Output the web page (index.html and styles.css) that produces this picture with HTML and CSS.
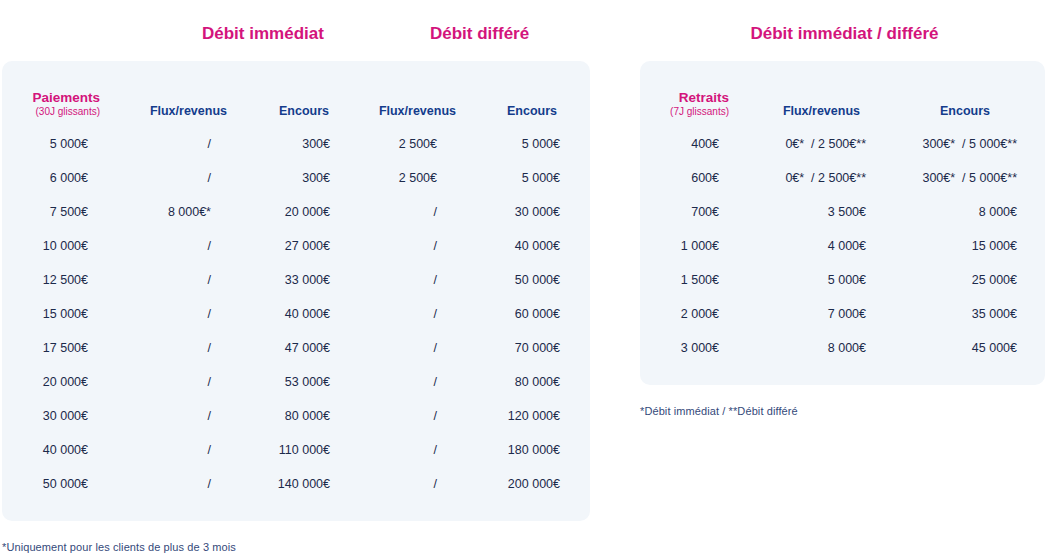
FILE: index.html
```html
<!DOCTYPE html>
<html lang="fr">
<head>
<meta charset="utf-8">
<title>Plafonds</title>
<link rel="stylesheet" href="styles.css">
</head>
<body>
<div class="page">
  <section class="block block-left">
    <div class="titles titles-left">
      <h2 class="title t1">Débit immédiat</h2>
      <h2 class="title t2">Débit différé</h2>
    </div>
    <div class="panel">
      <div class="grid grid-left">
        <div class="th c1"><span class="main">Paiements</span><span class="sub">(30J glissants)</span></div>
        <div class="th c2">Flux/revenus</div>
        <div class="th c3">Encours</div>
        <div class="th c4">Flux/revenus</div>
        <div class="th c5">Encours</div>

        <div class="td c1">5 000€</div><div class="td c2">/</div><div class="td c3">300€</div><div class="td c4">2 500€</div><div class="td c5">5 000€</div>
        <div class="td c1">6 000€</div><div class="td c2">/</div><div class="td c3">300€</div><div class="td c4">2 500€</div><div class="td c5">5 000€</div>
        <div class="td c1">7 500€</div><div class="td c2">8 000€*</div><div class="td c3">20 000€</div><div class="td c4">/</div><div class="td c5">30 000€</div>
        <div class="td c1">10 000€</div><div class="td c2">/</div><div class="td c3">27 000€</div><div class="td c4">/</div><div class="td c5">40 000€</div>
        <div class="td c1">12 500€</div><div class="td c2">/</div><div class="td c3">33 000€</div><div class="td c4">/</div><div class="td c5">50 000€</div>
        <div class="td c1">15 000€</div><div class="td c2">/</div><div class="td c3">40 000€</div><div class="td c4">/</div><div class="td c5">60 000€</div>
        <div class="td c1">17 500€</div><div class="td c2">/</div><div class="td c3">47 000€</div><div class="td c4">/</div><div class="td c5">70 000€</div>
        <div class="td c1">20 000€</div><div class="td c2">/</div><div class="td c3">53 000€</div><div class="td c4">/</div><div class="td c5">80 000€</div>
        <div class="td c1">30 000€</div><div class="td c2">/</div><div class="td c3">80 000€</div><div class="td c4">/</div><div class="td c5">120 000€</div>
        <div class="td c1">40 000€</div><div class="td c2">/</div><div class="td c3">110 000€</div><div class="td c4">/</div><div class="td c5">180 000€</div>
        <div class="td c1">50 000€</div><div class="td c2">/</div><div class="td c3">140 000€</div><div class="td c4">/</div><div class="td c5">200 000€</div>
      </div>
    </div>
    <p class="note">*Uniquement pour les clients de plus de 3 mois</p>
  </section>

  <section class="block block-right">
    <div class="titles titles-right">
      <h2 class="title">Débit immédiat / différé</h2>
    </div>
    <div class="panel">
      <div class="grid grid-right">
        <div class="th r1"><span class="main">Retraits</span><span class="sub">(7J glissants)</span></div>
        <div class="th r2">Flux/revenus</div>
        <div class="th r3">Encours</div>

        <div class="td r1">400€</div><div class="td r2">0€*&nbsp; / 2 500€**</div><div class="td r3">300€*&nbsp; / 5 000€**</div>
        <div class="td r1">600€</div><div class="td r2">0€*&nbsp; / 2 500€**</div><div class="td r3">300€*&nbsp; / 5 000€**</div>
        <div class="td r1">700€</div><div class="td r2">3 500€</div><div class="td r3">8 000€</div>
        <div class="td r1">1 000€</div><div class="td r2">4 000€</div><div class="td r3">15 000€</div>
        <div class="td r1">1 500€</div><div class="td r2">5 000€</div><div class="td r3">25 000€</div>
        <div class="td r1">2 000€</div><div class="td r2">7 000€</div><div class="td r3">35 000€</div>
        <div class="td r1">3 000€</div><div class="td r2">8 000€</div><div class="td r3">45 000€</div>
      </div>
    </div>
    <p class="note">*Débit immédiat / **Débit différé</p>
  </section>
</div>
</body>
</html>
```

FILE: styles.css
```css
* { box-sizing: border-box; }

html, body {
  margin: 0;
  padding: 0;
  background: #ffffff;
}

body {
  font-family: "Liberation Sans", Arial, sans-serif;
  color: #1c2a4b;
  width: 1045px;
  height: 558px;
  overflow: hidden;
}

.page {
  display: flex;
  align-items: flex-start;
  padding-left: 2px;
}

.block-left { width: 588px; }
.block-right { width: 405px; margin-left: 50px; }

.titles {
  height: 61px;
  padding-top: 24px;
}

.titles-left {
  display: grid;
  grid-template-columns: 200px 228px 1fr;
}
.titles-left .t1 { grid-column: 2; }
.titles-left .t2 { grid-column: 3; }

.titles-right { text-align: center; padding-left: 4px; }

.title {
  margin: 0;
  font-size: 17px;
  line-height: 20px;
  font-weight: 700;
  color: #d3147c;
  white-space: nowrap;
}

.panel {
  background: #f2f6fa;
  border-radius: 10px;
}

.grid {
  display: grid;
  align-items: last baseline;
}

.grid-left {
  grid-template-columns: 80px 127px 103px 126px 104px;
  padding: 30px 30px 20px 18px;
}

.grid-right {
  grid-template-columns: 69px 137px 151px;
  padding: 30px 28px 20px 20px;
}

.th {
  font-size: 12.5px;
  line-height: 16px;
  font-weight: 700;
  color: #143c8c;
  text-align: right;
  white-space: nowrap;
  margin-bottom: 8px;
}

.th .main {
  display: block;
  font-size: 13.5px;
  line-height: 14px;
  color: #d3147c;
}

.th .sub {
  display: block;
  font-size: 10px;
  line-height: 13px;
  font-weight: 400;
  color: #d3147c;
}

.td {
  font-size: 12.5px;
  line-height: 34px;
  text-align: right;
  white-space: nowrap;
}

.grid-left .td.c1 { padding-right: 12px; }
.grid-left .td.c2 { padding-right: 16px; }
.grid-left .th.c3 { padding-right: 1px; }
.grid-left .td.c4 { padding-right: 19px; }
.grid-left .th.c5 { padding-right: 3px; }

.grid-right .td.r1 { padding-right: 10px; }
.grid-right .th.r2 { padding-right: 6px; }
.grid-right .th.r3 { padding-right: 27px; }

.note {
  margin: 20px 0 0;
  font-size: 11px;
  line-height: 12px;
  letter-spacing: 0.1px;
  color: #34497a;
  white-space: nowrap;
}
```
